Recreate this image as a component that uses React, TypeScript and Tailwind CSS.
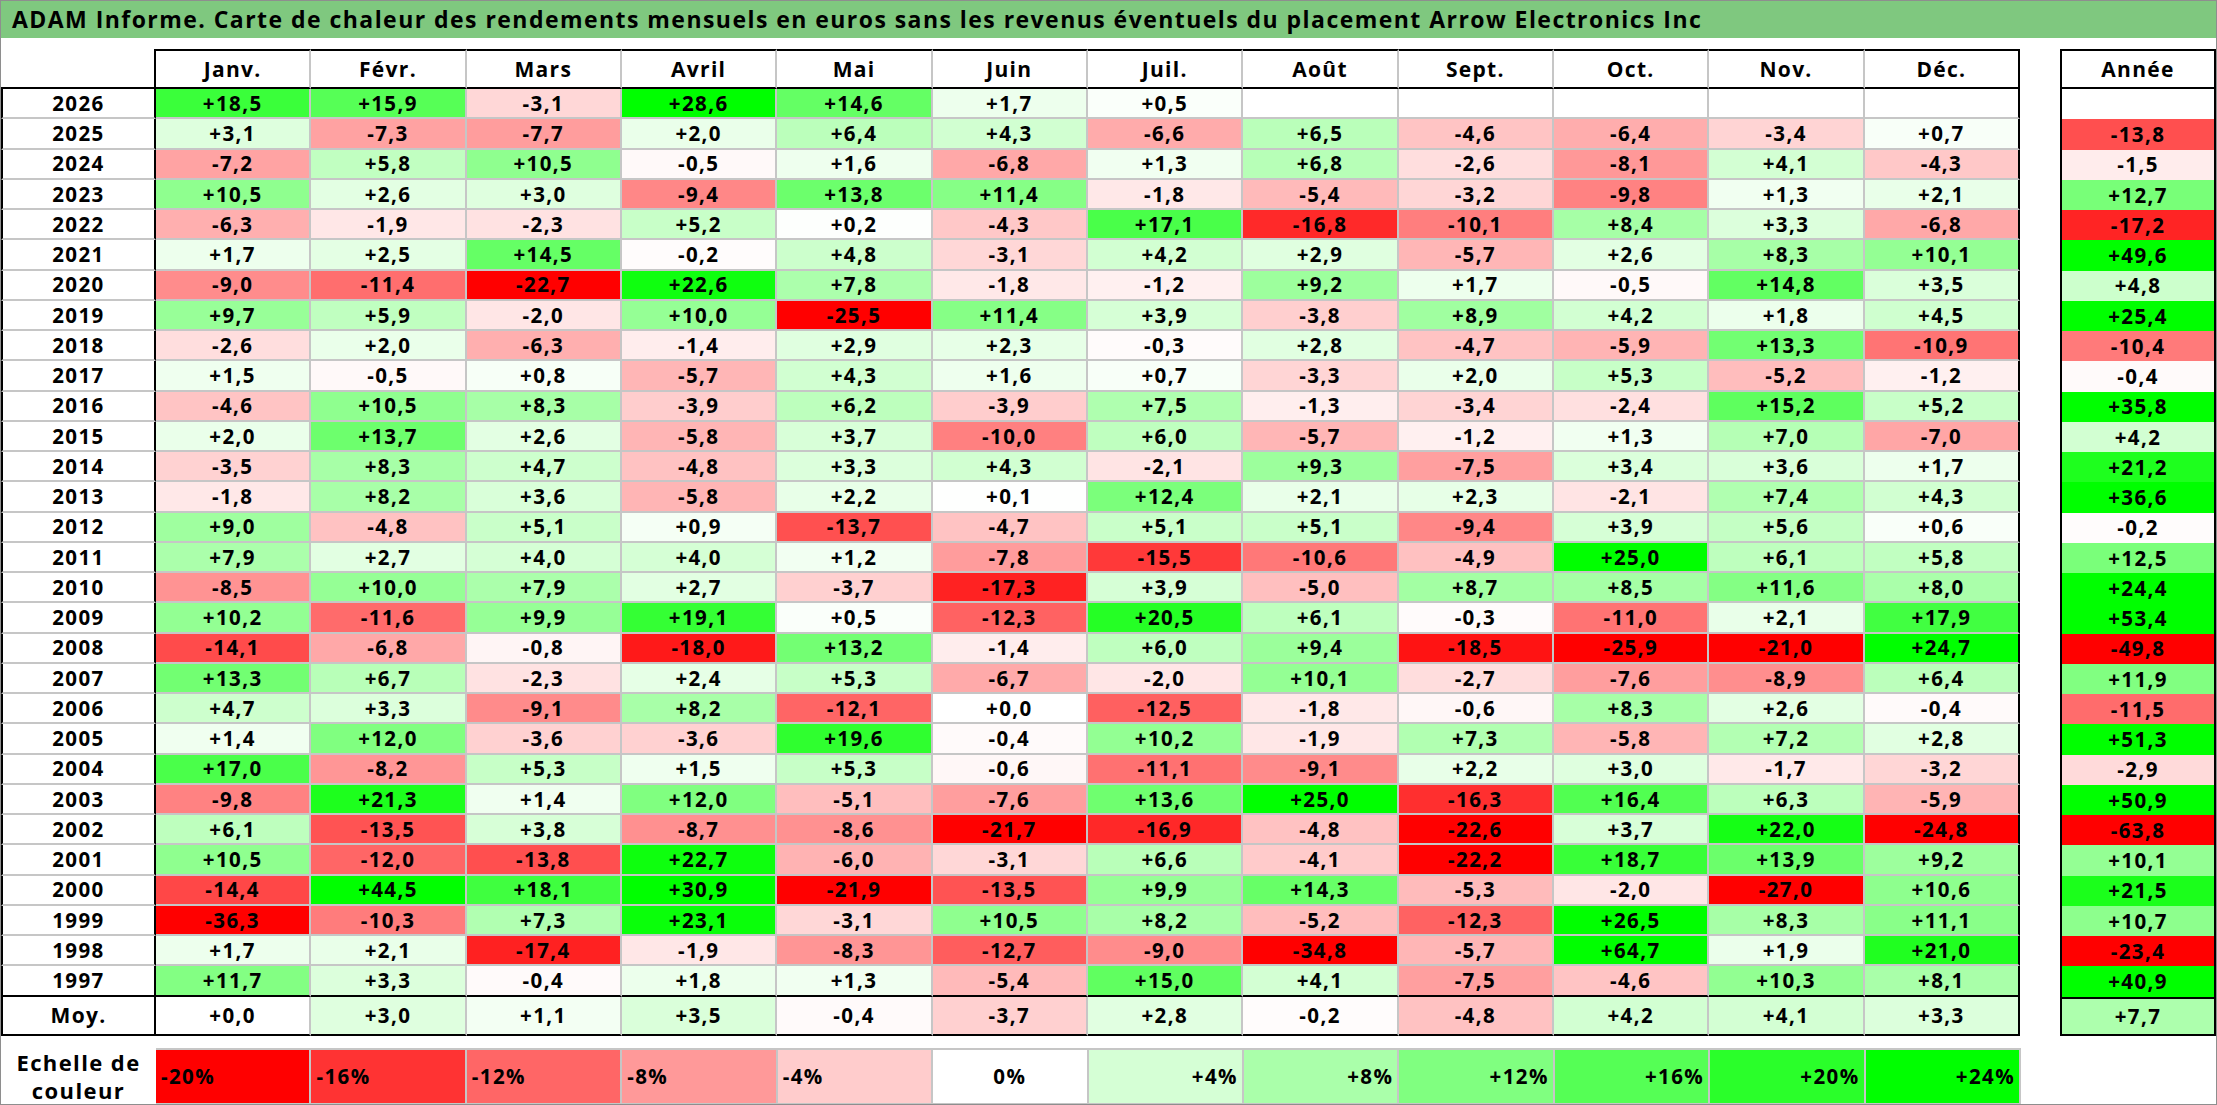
import { type ReactNode } from "react";

type Row = { year: string; values: (number | null)[]; total: number | null };

const MONTHS = ["Janv.", "Févr.", "Mars", "Avril", "Mai", "Juin", "Juil.", "Août", "Sept.", "Oct.", "Nov.", "Déc."];

const RAW: [string, string, string][] = [
  ["2026", "18.5 15.9 -3.1 28.6 14.6 1.7 0.5 x x x x x", "x"],
  ["2025", "3.1 -7.3 -7.7 2.0 6.4 4.3 -6.6 6.5 -4.6 -6.4 -3.4 0.7", "-13.8"],
  ["2024", "-7.2 5.8 10.5 -0.5 1.6 -6.8 1.3 6.8 -2.6 -8.1 4.1 -4.3", "-1.5"],
  ["2023", "10.5 2.6 3.0 -9.4 13.8 11.4 -1.8 -5.4 -3.2 -9.8 1.3 2.1", "12.7"],
  ["2022", "-6.3 -1.9 -2.3 5.2 0.2 -4.3 17.1 -16.8 -10.1 8.4 3.3 -6.8", "-17.2"],
  ["2021", "1.7 2.5 14.5 -0.2 4.8 -3.1 4.2 2.9 -5.7 2.6 8.3 10.1", "49.6"],
  ["2020", "-9.0 -11.4 -22.7 22.6 7.8 -1.8 -1.2 9.2 1.7 -0.5 14.8 3.5", "4.8"],
  ["2019", "9.7 5.9 -2.0 10.0 -25.5 11.4 3.9 -3.8 8.9 4.2 1.8 4.5", "25.4"],
  ["2018", "-2.6 2.0 -6.3 -1.4 2.9 2.3 -0.3 2.8 -4.7 -5.9 13.3 -10.9", "-10.4"],
  ["2017", "1.5 -0.5 0.8 -5.7 4.3 1.6 0.7 -3.3 2.0 5.3 -5.2 -1.2", "-0.4"],
  ["2016", "-4.6 10.5 8.3 -3.9 6.2 -3.9 7.5 -1.3 -3.4 -2.4 15.2 5.2", "35.8"],
  ["2015", "2.0 13.7 2.6 -5.8 3.7 -10.0 6.0 -5.7 -1.2 1.3 7.0 -7.0", "4.2"],
  ["2014", "-3.5 8.3 4.7 -4.8 3.3 4.3 -2.1 9.3 -7.5 3.4 3.6 1.7", "21.2"],
  ["2013", "-1.8 8.2 3.6 -5.8 2.2 0.1 12.4 2.1 2.3 -2.1 7.4 4.3", "36.6"],
  ["2012", "9.0 -4.8 5.1 0.9 -13.7 -4.7 5.1 5.1 -9.4 3.9 5.6 0.6", "-0.2"],
  ["2011", "7.9 2.7 4.0 4.0 1.2 -7.8 -15.5 -10.6 -4.9 25.0 6.1 5.8", "12.5"],
  ["2010", "-8.5 10.0 7.9 2.7 -3.7 -17.3 3.9 -5.0 8.7 8.5 11.6 8.0", "24.4"],
  ["2009", "10.2 -11.6 9.9 19.1 0.5 -12.3 20.5 6.1 -0.3 -11.0 2.1 17.9", "53.4"],
  ["2008", "-14.1 -6.8 -0.8 -18.0 13.2 -1.4 6.0 9.4 -18.5 -25.9 -21.0 24.7", "-49.8"],
  ["2007", "13.3 6.7 -2.3 2.4 5.3 -6.7 -2.0 10.1 -2.7 -7.6 -8.9 6.4", "11.9"],
  ["2006", "4.7 3.3 -9.1 8.2 -12.1 0.0 -12.5 -1.8 -0.6 8.3 2.6 -0.4", "-11.5"],
  ["2005", "1.4 12.0 -3.6 -3.6 19.6 -0.4 10.2 -1.9 7.3 -5.8 7.2 2.8", "51.3"],
  ["2004", "17.0 -8.2 5.3 1.5 5.3 -0.6 -11.1 -9.1 2.2 3.0 -1.7 -3.2", "-2.9"],
  ["2003", "-9.8 21.3 1.4 12.0 -5.1 -7.6 13.6 25.0 -16.3 16.4 6.3 -5.9", "50.9"],
  ["2002", "6.1 -13.5 3.8 -8.7 -8.6 -21.7 -16.9 -4.8 -22.6 3.7 22.0 -24.8", "-63.8"],
  ["2001", "10.5 -12.0 -13.8 22.7 -6.0 -3.1 6.6 -4.1 -22.2 18.7 13.9 9.2", "10.1"],
  ["2000", "-14.4 44.5 18.1 30.9 -21.9 -13.5 9.9 14.3 -5.3 -2.0 -27.0 10.6", "21.5"],
  ["1999", "-36.3 -10.3 7.3 23.1 -3.1 10.5 8.2 -5.2 -12.3 26.5 8.3 11.1", "10.7"],
  ["1998", "1.7 2.1 -17.4 -1.9 -8.3 -12.7 -9.0 -34.8 -5.7 64.7 1.9 21.0", "-23.4"],
  ["1997", "11.7 3.3 -0.4 1.8 1.3 -5.4 15.0 4.1 -7.5 -4.6 10.3 8.1", "40.9"],
];

const parse = (s: string) => (s === "x" ? null : parseFloat(s));

const ROWS: Row[] = RAW.map(([year, vals, total]) => ({
  year,
  values: vals.split(" ").map(parse),
  total: parse(total),
}));

const AVG: Row = {
  year: "Moy.",
  values: "0.0 3.0 1.1 3.5 -0.4 -3.7 2.8 -0.2 -4.8 4.2 4.1 3.3".split(" ").map(parse),
  total: 7.7,
};

const SCALE = [-20, -16, -12, -8, -4, 0, 4, 8, 12, 16, 20, 24];

function heat(v: number | null) {
  if (v === null) return "#ffffff";
  if (v >= 0) {
    const c = Math.round(255 * (1 - Math.min(v / 24, 1)));
    return `rgb(${c},255,${c})`;
  }
  const c = Math.round(255 * (1 - Math.min(-v / 20, 1)));
  return `rgb(255,${c},${c})`;
}

function fmt(v: number | null) {
  if (v === null) return "";
  const s = Math.abs(v).toFixed(1).replace(".", ",");
  return (v < 0 ? "-" : "+") + s;
}

const grid = "grid grid-cols-[155px_repeat(12,minmax(0,1fr))]";

function Cell({ v, last, bottom }: { v: number | null; last: boolean; bottom: string }) {
  return (
    <div
      className={`flex items-center justify-center border-b-2 ${bottom} ${
        last ? "border-r-2 border-r-black" : "border-r-2 border-r-[#c6c6c6]"
      }`}
      style={{ backgroundColor: heat(v) }}
    >
      {fmt(v)}
    </div>
  );
}

function YearCell({ children, bottom }: { children: ReactNode; bottom: string }) {
  return (
    <div className={`flex items-center justify-center border-x-2 border-x-black border-b-2 ${bottom} bg-white`}>
      {children}
    </div>
  );
}

export default function App() {
  return (
    <div className="w-[2217px] h-[1105px] overflow-hidden border border-[#8e8e8e] bg-white text-black font-['Open_Sans','Liberation_Sans',sans-serif] font-bold leading-none">
      <div className="flex h-[37px] items-center bg-[#7fc87f] pl-[11px] text-[23px] tracking-[1.45px]">
        ADAM Informe. Carte de chaleur des rendements mensuels en euros sans les revenus éventuels du placement Arrow Electronics Inc
      </div>

      <div className="mt-[11px] flex items-start">
        {/* main table */}
        <div className="w-[2020px] text-[20.5px] tracking-[1.4px]">
          <div className={`${grid} h-[40px] text-[21px] tracking-[1.3px]`}>
            <div className="border-b-2 border-r-2 border-black" />
            {MONTHS.map((m, i) => (
              <div
                key={m}
                className={`flex items-center justify-center border-y-2 border-y-black ${
                  i === 11 ? "border-r-2 border-r-black" : "border-r-2 border-r-[#c6c6c6]"
                }`}
              >
                {m}
              </div>
            ))}
          </div>

          {ROWS.map((r, ri) => {
            const bottom = ri === ROWS.length - 1 ? "border-b-black" : "border-b-[#c6c6c6]";
            return (
              <div key={r.year} className={`${grid} h-[30.25px]`}>
                <YearCell bottom={bottom}>{r.year}</YearCell>
                {r.values.map((v, i) => (
                  <Cell key={i} v={v} last={i === 11} bottom={bottom} />
                ))}
              </div>
            );
          })}

          <div className={`${grid} h-[39px]`}>
            <YearCell bottom="border-b-black">
              <span className="text-[21px] tracking-[1.3px]">{AVG.year}</span>
            </YearCell>
            {AVG.values.map((v, i) => (
              <Cell key={i} v={v} last={i === 11} bottom="border-b-black" />
            ))}
          </div>
        </div>

        {/* year totals */}
        <div className="ml-[40px] w-[156px] text-[20.5px] tracking-[1.4px]">
          <div className="flex h-[40px] items-center justify-center border-2 border-black text-[21px] tracking-[1.3px]">
            Année
          </div>
          <div className="border-x-2 border-black">
            {ROWS.map((r) => (
              <div
                key={r.year}
                className="flex h-[30.25px] items-center justify-center"
                style={{ backgroundColor: heat(r.total) }}
              >
                {fmt(r.total)}
              </div>
            ))}
          </div>
          <div
            className="flex h-[39px] items-center justify-center border-2 border-black"
            style={{ backgroundColor: heat(AVG.total) }}
          >
            {fmt(AVG.total)}
          </div>
        </div>
      </div>

      {/* colour scale */}
      <div className={`${grid} mt-[12px] h-[57px] w-[2020px] text-[20.5px] tracking-[1.4px]`}>
        <div className="flex flex-col items-center justify-center text-[22px] leading-[28px] tracking-[1.4px]">
          <span>Echelle de</span>
          <span>couleur</span>
        </div>
        {SCALE.map((s) => (
          <div
            key={s}
            className={`flex items-center border-2 border-l-0 border-[#c6c6c6] first:border-l-2 ${
              s < 0 ? "justify-start pl-[5px]" : s === 0 ? "justify-center" : "justify-end pr-[4px]"
            }`}
            style={{ backgroundColor: heat(s) }}
          >
            {s > 0 ? `+${s}%` : `${s}%`}
          </div>
        ))}
      </div>
    </div>
  );
}
